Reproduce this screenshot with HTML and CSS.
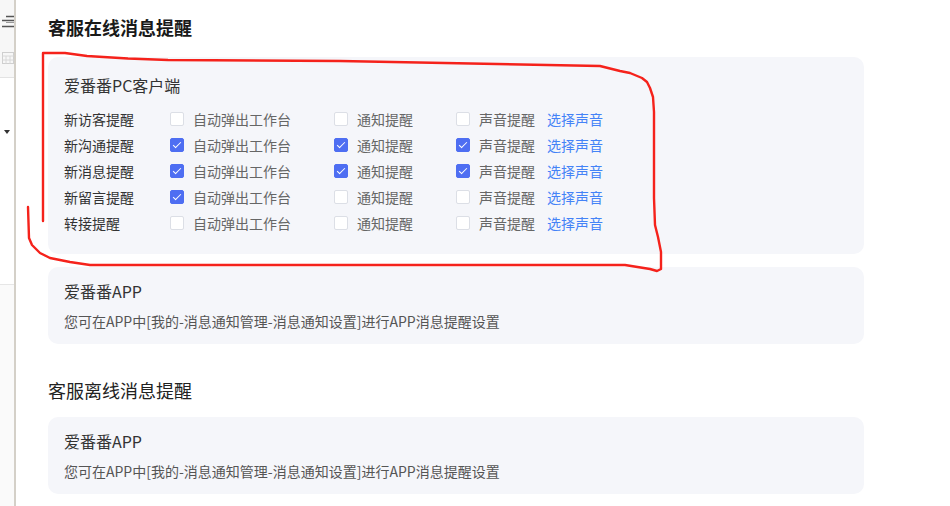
FILE: index.html
```html
<!DOCTYPE html>
<html lang="zh-CN">
<head>
    <meta charset="UTF-8">
    <meta name="viewport" content="width=device-width, initial-scale=1.0">
    <title>消息提醒设置</title>
    <link rel="stylesheet" href="styles.css">
</head>
<body>
    <div class="page">
        <aside class="side">
            <div class="side-top">
                <svg class="fold-icon" width="12" height="13" viewBox="0 0 12 13">
                    <path d="M4 1.5H12M0 5.5H12M0 11.5H12" stroke="#555" stroke-width="1.4" fill="none"/>
                    <path d="M4 7.5H12" stroke="#999" stroke-width="1" fill="none"/>
                </svg>
                <svg class="table-icon" width="12" height="12" viewBox="0 0 12 12">
                    <rect x="0.5" y="0.5" width="11" height="11" fill="none" stroke="#cfcfcf"/>
                    <path d="M0.5 4H11.5M0.5 8H11.5M4 4V11.5M8 4V11.5" stroke="#d8d8d8" fill="none"/>
                </svg>
            </div>
            <div class="side-mid"><span class="caret"></span></div>
            <div class="side-bottom"></div>
        </aside>

        <main class="main">
            <h2 class="section-title">客服在线消息提醒</h2>
            <div class="card card-pc">
                <div class="card-title">爱番番PC客户端</div>
                <div class="row">
                    <span class="row-label">新访客提醒</span>
                    <label class="check wide"><span class="box"></span>自动弹出工作台</label>
                    <label class="check"><span class="box"></span>通知提醒</label>
                    <label class="check last"><span class="box"></span>声音提醒</label>
                    <a class="link">选择声音</a>
                </div>
                <div class="row">
                    <span class="row-label">新沟通提醒</span>
                    <label class="check wide"><span class="box on"></span>自动弹出工作台</label>
                    <label class="check"><span class="box on"></span>通知提醒</label>
                    <label class="check last"><span class="box on"></span>声音提醒</label>
                    <a class="link">选择声音</a>
                </div>
                <div class="row">
                    <span class="row-label">新消息提醒</span>
                    <label class="check wide"><span class="box on"></span>自动弹出工作台</label>
                    <label class="check"><span class="box on"></span>通知提醒</label>
                    <label class="check last"><span class="box on"></span>声音提醒</label>
                    <a class="link">选择声音</a>
                </div>
                <div class="row">
                    <span class="row-label">新留言提醒</span>
                    <label class="check wide"><span class="box on"></span>自动弹出工作台</label>
                    <label class="check"><span class="box"></span>通知提醒</label>
                    <label class="check last"><span class="box"></span>声音提醒</label>
                    <a class="link">选择声音</a>
                </div>
                <div class="row">
                    <span class="row-label">转接提醒</span>
                    <label class="check wide"><span class="box"></span>自动弹出工作台</label>
                    <label class="check"><span class="box"></span>通知提醒</label>
                    <label class="check last"><span class="box"></span>声音提醒</label>
                    <a class="link">选择声音</a>
                </div>
            </div>

            <div class="card card-app">
                <div class="card-title">爱番番APP</div>
                <div class="desc">您可在APP中[我的-消息通知管理-消息通知设置]进行APP消息提醒设置</div>
            </div>

            <h2 class="section-title light">客服离线消息提醒</h2>
            <div class="card card-app">
                <div class="card-title">爱番番APP</div>
                <div class="desc">您可在APP中[我的-消息通知管理-消息通知设置]进行APP消息提醒设置</div>
            </div>
        </main>

        <!-- hand-drawn highlight over the PC card -->
        <svg class="scribble" width="950" height="506" viewBox="0 0 950 506">
            <path d="M43 221 L43 53 L65 53 L87 56 L128 58.5 L168 60 L340 61 L600 66 L620 71 L630 73 L642 78 L647 82 L650 88 L653 97 L654 112 L654 198 L655 225 L658 237 L661 252 L661 269 L657 271 L650 269 L625 265 L600 265 L90 265 L70 262 L60 260 L50 258 L40 253 L32 245 L29 238 L28 207"
                  fill="none" stroke="#f5221b" stroke-width="2.4" stroke-linejoin="round" stroke-linecap="round"/>
        </svg>
    </div>
</body>
</html>
```

FILE: styles.css
```css
html, body {
    margin: 0;
    padding: 0;
    background: #ffffff;
}
body {
    font-family: "Noto Sans CJK SC", "Noto Sans", sans-serif;
    color: #333333;
}
.page {
    position: relative;
    display: flex;
    height: 506px;
    overflow: hidden;
}

/* cut-off sidebar on the left */
.side {
    width: 14px;
    border-right: 2px solid #d4d0c8;
    display: flex;
    flex-direction: column;
    flex-shrink: 0;
}
.side-top {
    height: 78px;
    box-sizing: border-box;
    padding: 15px 0 0 2px;
    background: #f7f7f7;
    border-bottom: 1px solid #e3e3e3;
}
.side-top svg {
    display: block;
}
.table-icon {
    margin-top: 24px;
}
.side-mid {
    height: 207px;
    box-sizing: border-box;
    padding: 52px 0 0 4px;
    border-bottom: 1px solid #e6e6e6;
}
.caret {
    display: block;
    width: 0;
    height: 0;
    border-left: 3px solid transparent;
    border-right: 3px solid transparent;
    border-top: 4px solid #333333;
}
.side-bottom {
    flex: 1;
    background: #fafafa;
}

/* content */
.main {
    flex: 1;
    padding: 14px 86px 0 32px;
}
.section-title {
    margin: 0 0 17px;
    font-size: 18px;
    line-height: 26px;
    font-weight: bold;
    color: #1a1a1a;
}
.section-title.light {
    margin: 33px 0 14px;
    font-weight: normal;
    color: #222222;
}
.card {
    background: #f5f6fa;
    border-radius: 10px;
}
.card-pc {
    padding: 16px 16px 18px;
    margin-bottom: 13px;
}
.card-title {
    font-size: 16px;
    line-height: 24px;
    margin-bottom: 9px;
    color: #333333;
}
.row {
    display: flex;
    align-items: center;
    height: 26px;
    font-size: 14px;
}
.row-label {
    width: 106px;
    color: #333333;
}
.check {
    display: flex;
    align-items: center;
    margin-right: 43px;
    color: #666666;
}
.check.last {
    margin-right: 12px;
}
.box {
    position: relative;
    width: 14px;
    height: 14px;
    box-sizing: border-box;
    border: 1px solid #dcdfe6;
    border-radius: 2px;
    background: #ffffff;
    margin-right: 9px;
}
.box.on {
    background: #4e6ef2;
    border-color: #4e6ef2;
}
.box.on::after {
    content: "";
    position: absolute;
    left: 4px;
    top: 1px;
    width: 3px;
    height: 7px;
    border: 1px solid #ffffff;
    border-left: 0;
    border-top: 0;
    transform: rotate(45deg);
}
.link {
    color: #4483f7;
    cursor: pointer;
}
.card-app {
    padding: 13px 16px 12px;
}
.card-app .card-title {
    line-height: 22px;
    margin-bottom: 8px;
}
.desc {
    font-size: 14px;
    line-height: 22px;
    color: #555555;
}

.scribble {
    position: absolute;
    top: 0;
    left: 0;
    pointer-events: none;
}
```
